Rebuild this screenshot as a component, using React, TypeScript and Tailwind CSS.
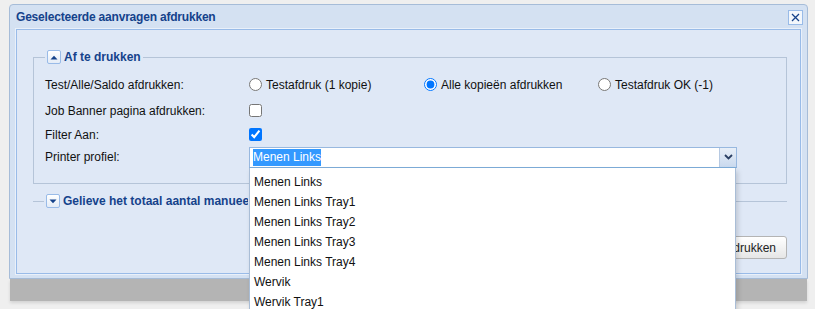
import { useState } from 'react';

const profiles = [
  'Menen Links',
  'Menen Links Tray1',
  'Menen Links Tray2',
  'Menen Links Tray3',
  'Menen Links Tray4',
  'Wervik',
  'Wervik Tray1',
  'Wervik Tray2',
];

function ToggleTool({ up }: { up: boolean }) {
  return (
    <span className="flex h-[14px] w-[14px] shrink-0 items-center justify-center rounded-[2px] border border-[#99bbe8] bg-gradient-to-b from-white to-[#e4ecf7]">
      <svg width="8" height="5" viewBox="0 0 8 5">
        {up ? <path d="M0.5 4.5 L4 0.8 L7.5 4.5 Z" fill="#15428b" /> : <path d="M0.5 0.5 L4 4.2 L7.5 0.5 Z" fill="#15428b" />}
      </svg>
    </span>
  );
}

function Row({ label, h, children }: { label: string; h: string; children: React.ReactNode }) {
  return (
    <div className={`flex items-center ${h}`}>
      <div className="w-[204px] shrink-0">{label}</div>
      {children}
    </div>
  );
}

export default function App() {
  const [mode, setMode] = useState('alle');
  const [banner, setBanner] = useState(false);
  const [filter, setFilter] = useState(true);

  const radios = [
    { id: 'test', label: 'Testafdruk (1 kopie)', w: 'w-[175px]' },
    { id: 'alle', label: 'Alle kopieën afdrukken', w: 'w-[174px]' },
    { id: 'ok', label: 'Testafdruk OK (-1)', w: 'w-auto' },
  ];

  return (
    <div className="relative h-[309px] w-[815px] overflow-hidden bg-[#efefef] pl-[9px] pt-[4px] font-['Liberation_Sans',Tahoma,Arial,sans-serif] text-[12px] text-[#111]">
      <div className="w-[799px]">
        <div className="rounded-t-[4px] border border-[#a6bcd8] bg-[#d4e1f2] px-[6px] pb-[4px]">
          {/* header */}
          <div className="flex h-[24px] items-center justify-between">
            <span className="text-[12px] font-bold tracking-[-0.2px] text-[#15428b]">Geselecteerde aanvragen afdrukken</span>
            <span className="-mr-[2px] flex h-[15px] w-[15px] items-center justify-center border border-[#99bbe8] bg-[#f3f7fc]">
              <svg width="9" height="9" viewBox="0 0 9 9">
                <path d="M1 1 L8 8 M8 1 L1 8" stroke="#15428b" strokeWidth="1.3" />
              </svg>
            </span>
          </div>

          {/* body */}
          <div className="h-[245px] border border-[#99bbe8] bg-[#dfe8f6] pt-[18px] shadow-[0_0_0_1px_#e9f0fa]">
            <fieldset className="ml-[16px] mr-[13px] border border-[#b5c4d8] px-[11px] pb-[15px] pt-[5px]">
              <legend className="ml-0 flex items-center gap-[3px] px-[2px]">
                <ToggleTool up />
                <span className="font-bold text-[#15428b]">Af te drukken</span>
              </legend>

              <Row label="Test/Alle/Saldo afdrukken:" h="h-[27px]">
                {radios.map((r) => (
                  <label key={r.id} className={`flex items-center gap-[4px] ${r.w}`}>
                    <input
                      type="radio"
                      name="mode"
                      className="m-0 h-[13px] w-[13px]"
                      checked={mode === r.id}
                      onChange={() => setMode(r.id)}
                    />
                    {r.label}
                  </label>
                ))}
              </Row>
              <Row label="Job Banner pagina afdrukken:" h="h-[25px]">
                <input type="checkbox" className="m-0 h-[13px] w-[13px]" checked={banner} onChange={() => setBanner(!banner)} />
              </Row>
              <Row label="Filter Aan:" h="h-[23px]">
                <input type="checkbox" className="m-0 h-[13px] w-[13px]" checked={filter} onChange={() => setFilter(!filter)} />
              </Row>
              <Row label="Printer profiel:" h="h-[22px]">
                <div className="relative">
                  <div className="flex h-[21px] w-[488px] border border-[#98b8df] border-b-[#7eadd9] bg-white">
                    <div className="flex flex-1 items-center pl-[3px]">
                      <span className="bg-[#3399ff] leading-[17px] text-white">Menen Links</span>
                    </div>
                    <div className="flex w-[17px] items-center justify-center border-l border-[#b6c9e2] bg-gradient-to-b from-[#e8eff8] to-[#c9d9ee]">
                      <svg width="9" height="6" viewBox="0 0 9 6">
                        <path d="M1 1 L4.5 4.5 L8 1" stroke="#2a3f63" strokeWidth="1.8" fill="none" />
                      </svg>
                    </div>
                  </div>
                  <ul className="absolute left-0 top-full z-10 w-[487px] border border-t-0 border-[#a9bdd6] bg-white pt-[4px] text-[#111] shadow-[2px_3px_5px_rgba(0,0,0,0.15)]">
                    {profiles.map((p) => (
                      <li key={p} className="h-[20px] pl-[4px] leading-[20px]">
                        {p}
                      </li>
                    ))}
                  </ul>
                </div>
              </Row>
            </fieldset>

            <fieldset className="ml-[16px] mr-[13px] mt-[8px] border-0 border-t border-[#b5c4d8] px-[11px]">
              <legend className="flex items-center gap-[3px] px-[2px]">
                <ToggleTool up={false} />
                <span className="max-w-[185px] overflow-hidden whitespace-nowrap font-bold text-[#15428b]">
                  Gelieve het totaal aantal manueel te tellen exemplaren in te geven
                </span>
              </legend>
            </fieldset>

            <div className="mr-[13px] mt-[26px] flex justify-end">
              <button className="h-[23px] rounded-[3px] border border-[#b4b4b4] bg-gradient-to-b from-white to-[#e6e6e6] px-[10px] text-[12px] text-[#222]">
                Afdrukken
              </button>
            </div>
          </div>
        </div>
        <div className="ml-[1px] h-[22px] w-[797px] bg-[#b4b4b4] shadow-[0_2px_3px_rgba(0,0,0,0.12)]" />
      </div>
    </div>
  );
}
